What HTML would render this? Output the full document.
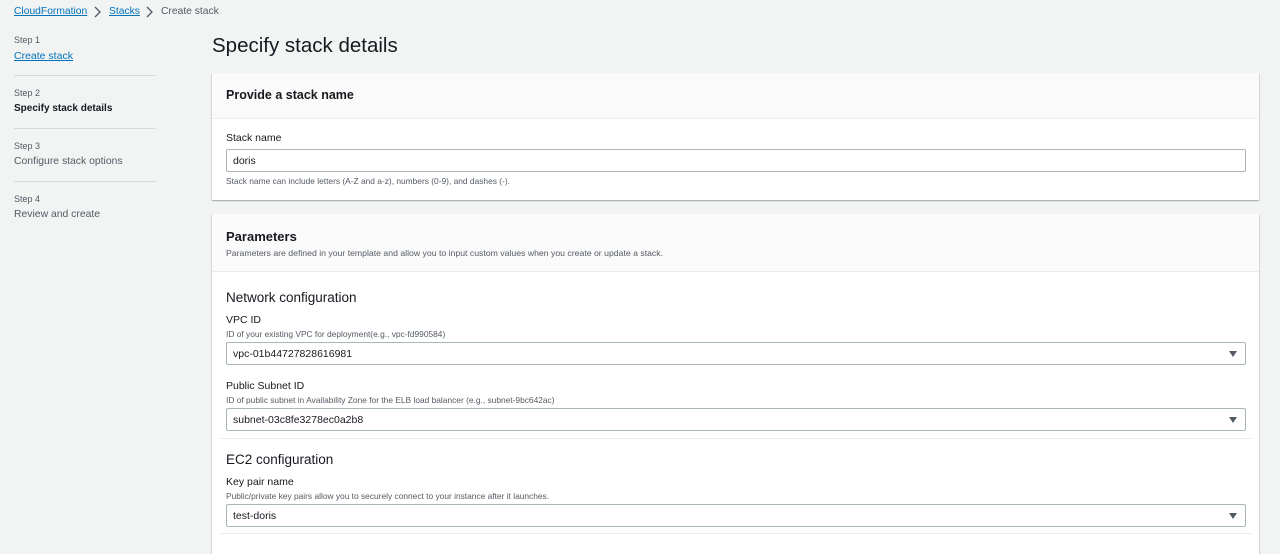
<!DOCTYPE html>
<html><head><style>
*{margin:0;padding:0;box-sizing:border-box}
body{width:1280px;height:537px;overflow:hidden;background:#f2f3f3;font-family:"Liberation Sans",Arial,sans-serif;color:#16191f;position:relative}
.a{position:absolute;white-space:nowrap}
.link{color:#0073bb;text-decoration:underline}
.small{font-size:9px;color:#545b64}
.sep{position:absolute;left:14px;width:142px;height:1px;background:#d5dbdb}
.card{position:absolute;left:212px;width:1047px;background:#fff;box-shadow:0 1px 1px rgba(0,28,36,.2),1px 1px 1px rgba(0,28,36,.1),-1px 1px 1px rgba(0,28,36,.1)}
.hdr{background:#fafafa;border-bottom:1px solid #eaeded}
.inp{position:absolute;left:226px;width:1020px;height:23px;border:1px solid #aab7b8;border-radius:2px;background:#fff;font-size:10.5px;padding:5px 6px}
.arr{position:absolute;right:8px;top:8px;width:0;height:0;border-left:4px solid transparent;border-right:4px solid transparent;border-top:6px solid #545b64}
.lbl{font-size:10.5px}
.hint{font-size:8.4px;color:#545b64}
</style></head><body>
<div class="a link" style="left:14px;top:6px;font-size:10.3px">CloudFormation</div>
<svg class="a" style="left:92px;top:6px" width="10" height="12"><path d="M3 1l5 5-5 5" stroke="#545b64" stroke-width="1.3" fill="none"/></svg>
<div class="a link" style="left:109px;top:6px;font-size:10.3px">Stacks</div>
<svg class="a" style="left:144px;top:6px" width="10" height="12"><path d="M3 1l5 5-5 5" stroke="#545b64" stroke-width="1.3" fill="none"/></svg>
<div class="a" style="left:161px;top:6px;font-size:10.3px;color:#545b64">Create stack</div>

<div class="a small" style="left:14px;top:35px">Step 1</div>
<div class="a link" style="left:14px;top:50px;font-size:10.5px">Create stack</div>
<div class="sep" style="top:75px"></div>
<div class="a small" style="left:14px;top:88px">Step 2</div>
<div class="a" style="left:14px;top:103px;font-size:10px;font-weight:bold">Specify stack details</div>
<div class="sep" style="top:128px"></div>
<div class="a small" style="left:14px;top:141px">Step 3</div>
<div class="a" style="left:14px;top:156px;font-size:10.4px;color:#545b64">Configure stack options</div>
<div class="sep" style="top:181px"></div>
<div class="a small" style="left:14px;top:194px">Step 4</div>
<div class="a" style="left:14px;top:209px;font-size:10.4px;color:#545b64">Review and create</div>

<div class="a" style="left:212px;top:34px;font-size:20.5px">Specify stack details</div>

<div class="card" style="top:73px;height:127px"><div class="hdr" style="height:46px"></div></div>
<div class="a" style="left:226px;top:88px;font-size:12.5px;font-weight:bold">Provide a stack name</div>
<div class="a lbl" style="left:226px;top:132px">Stack name</div>
<div class="inp" style="top:149px">doris</div>
<div class="a hint" style="left:226px;top:176px">Stack name can include letters (A-Z and a-z), numbers (0-9), and dashes (-).</div>

<div class="card" style="top:214px;height:340px"><div class="hdr" style="height:58px"></div></div>
<div class="a" style="left:226px;top:229px;font-size:13px;font-weight:bold">Parameters</div>
<div class="a" style="left:226px;top:248px;font-size:8.7px;color:#545b64">Parameters are defined in your template and allow you to input custom values when you create or update a stack.</div>

<div class="a" style="left:226px;top:290px;font-size:13.5px">Network configuration</div>
<div class="a lbl" style="left:226px;top:314px">VPC ID</div>
<div class="a hint" style="left:226px;top:329px">ID of your existing VPC for deployment(e.g., vpc-fd990584)</div>
<div class="inp" style="top:342px">vpc-01b44727828616981<span class="arr"></span></div>
<div class="a lbl" style="left:226px;top:380px">Public Subnet ID</div>
<div class="a hint" style="left:226px;top:395px">ID of public subnet in Availability Zone for the ELB load balancer (e.g., subnet-9bc642ac)</div>
<div class="inp" style="top:408px">subnet-03c8fe3278ec0a2b8<span class="arr"></span></div>
<div class="a" style="left:220px;top:438px;width:1032px;height:1px;background:#eaeded"></div>

<div class="a" style="left:226px;top:452px;font-size:13.5px">EC2 configuration</div>
<div class="a lbl" style="left:226px;top:476px">Key pair name</div>
<div class="a hint" style="left:226px;top:491px">Public/private key pairs allow you to securely connect to your instance after it launches.</div>
<div class="inp" style="top:504px">test-doris<span class="arr"></span></div>
<div class="a" style="left:220px;top:533px;width:1032px;height:1px;background:#eaeded"></div>
</body></html>
